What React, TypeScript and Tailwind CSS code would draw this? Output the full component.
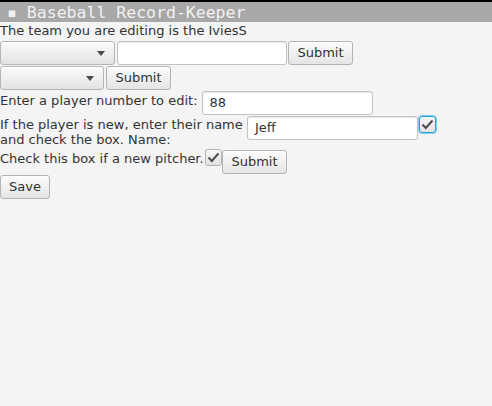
import React from 'react';

const font = { fontFamily: '"DejaVu Sans", Verdana, sans-serif' };

function Combo({ w }: { w: string }) {
  return (
    <div
      className={`${w} h-[24px] flex items-center justify-end pr-[9px] rounded-[3px] border border-[#b5b5b5] bg-gradient-to-b from-[#fbfbfb] to-[#e3e3e3] shadow-[inset_0_1px_0_#ffffff]`}
    >
      <div className="w-0 h-0 border-l-[4px] border-r-[4px] border-t-[5px] border-l-transparent border-r-transparent border-t-[#4a4a4a]" />
    </div>
  );
}

function Button({ label, w }: { label: string; w: string }) {
  return (
    <div
      className={`${w} h-[24px] flex items-center justify-center rounded-[3px] border border-[#b3b3b3] bg-gradient-to-b from-[#fcfcfc] to-[#e4e4e4] text-[13px] text-[#333333] shadow-[inset_0_1px_0_#ffffff]`}
    >
      {label}
    </div>
  );
}

function Field({ w, value }: { w: string; value?: string }) {
  return (
    <div
      className={`${w} h-[24px] flex items-center px-[7px] rounded-[3px] border border-[#c2c2c2] bg-white text-[13px] text-[#333333] shadow-[inset_0_1px_1px_#e8e8e8]`}
    >
      {value}
    </div>
  );
}

function Check({ focused }: { focused?: boolean }) {
  return (
    <div
      className={`w-[17px] h-[17px] flex items-center justify-center rounded-[3px] bg-gradient-to-b from-[#f7f7f7] to-[#e2e2e2] ${
        focused ? 'border border-[#1e9fd6] shadow-[0_0_0_1px_#8fd0ef]' : 'border border-[#b5b5b5]'
      }`}
    >
      <svg width="13" height="11" viewBox="0 0 13 11">
        <path d="M1.5 5.5 L4.8 9 L11.5 1.5" fill="none" stroke="#4d4d4d" strokeWidth="2" />
      </svg>
    </div>
  );
}

export default function App() {
  return (
    <div className="w-[492px] h-[406px] bg-[#f4f4f4] text-[#333333] overflow-hidden" style={font}>
      <div className="border-t-2 border-black h-[22px] bg-[#a8a8a8] flex items-center pl-[7px]">
        <span
          className="text-[16.5px] leading-none text-[#f2f2f2] mt-[2px]"
          style={{ fontFamily: '"DejaVu Sans Mono", monospace' }}
        >
          ▪ Baseball Record-Keeper
        </span>
      </div>

      <div className="text-[13px] leading-[17px] h-[17px]">The team you are editing is the IviesS</div>

      <div className="flex items-center mt-[2px]">
        <Combo w="w-[115px]" />
        <div className="ml-[2px]">
          <Field w="w-[170px]" />
        </div>
        <div className="ml-[1px]">
          <Button label="Submit" w="w-[65px]" />
        </div>
      </div>

      <div className="flex items-center gap-[2px] mt-[1px]">
        <Combo w="w-[104px]" />
        <Button label="Submit" w="w-[65px]" />
      </div>

      <div className="flex items-start gap-[4px] mt-[1px]">
        <span className="text-[13px] leading-[17px] mt-[1px]">Enter a player number to edit:</span>
        <Field w="w-[171px]" value="88" />
      </div>

      <div className="flex items-start mt-[1px]">
        <span className="text-[13px] leading-[15px] w-[247px] mt-[1px]">
          If the player is new, enter their name and check the box. Name:
        </span>
        <Field w="w-[171px]" value="Jeff" />
        <div className="ml-[1px]">
          <Check focused />
        </div>
      </div>

      <div className="flex items-start mt-[2px]">
        <span className="text-[13px] leading-[17px] mt-[1px] w-[205px]">Check this box if a new pitcher.</span>
        <Check />
        <div className="mt-[1px]">
          <Button label="Submit" w="w-[65px]" />
        </div>
      </div>

      <div className="mt-[1px]">
        <Button label="Save" w="w-[50px]" />
      </div>
    </div>
  );
}
